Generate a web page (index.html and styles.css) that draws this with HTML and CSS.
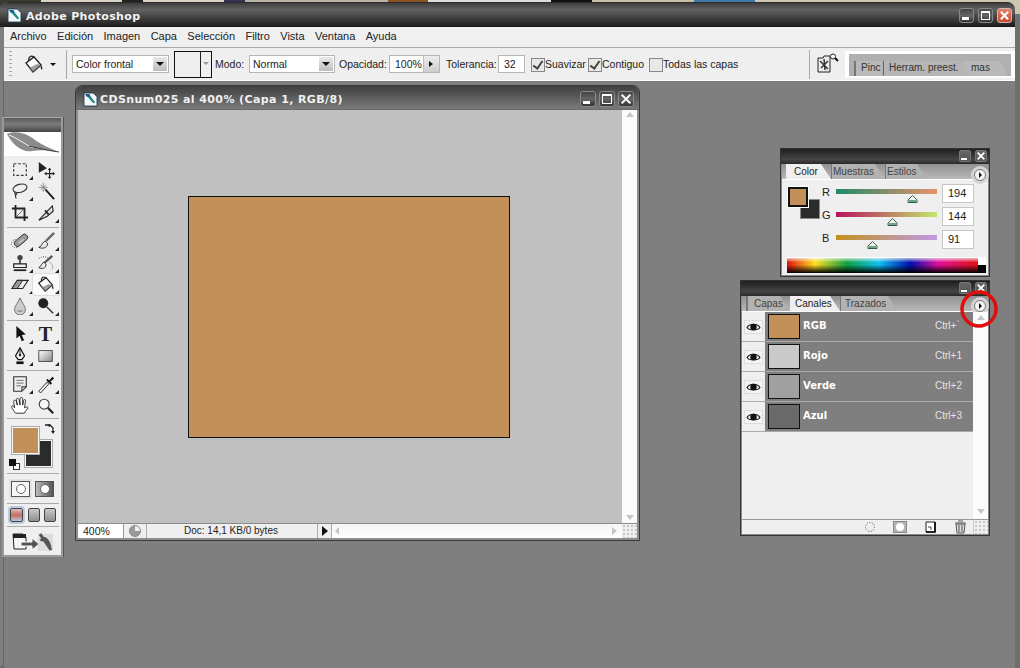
FILE: index.html
```html
<!DOCTYPE html>
<html lang="es">
<head>
<meta charset="utf-8">
<title>Adobe Photoshop</title>
<link rel="stylesheet" href="styles.css">
</head>
<body>
<div class="desktop">
  <div class="app">
    <header class="titlebar">
      <svg class="appicon" viewBox="0 0 16 16"><path d="M1 1h10l4 4v10H1z" fill="#f4f8fa" stroke="#16384a"/><path d="M3 3l8 9 2-1-7-9z" fill="#1c8a78"/><path d="M2 2h5l1 3H4z" fill="#1d5f96"/></svg>
      <span class="apptitle">Adobe Photoshop</span>
      <div class="wbtns app-btns">
        <span class="wbtn"><i class="min"></i></span>
        <span class="wbtn"><i class="max"></i></span>
        <span class="wbtn close"><svg viewBox="0 0 16 16"><path d="M3.5 3.5l9 9M12.5 3.5l-9 9" stroke="#fff" stroke-width="2.6"/></svg></span>
      </div>
    </header>
    <nav class="menubar">
      <span>Archivo</span><span>Edición</span><span>Imagen</span><span>Capa</span><span>Selección</span><span>Filtro</span><span>Vista</span><span>Ventana</span><span>Ayuda</span>
    </nav>
    <div class="options">
      <span class="gripper"></span>
      <svg class="opt-bucket" viewBox="0 0 20 20"><path d="M2 9l8-6 7 8-8 7z" fill="#fff" stroke="#222" stroke-width="1.4"/><path d="M9 18l8-7-4-1-8 4z" fill="#777" opacity=".7"/><path d="M10 3C7 1 4 3 5 7" fill="none" stroke="#222" stroke-width="1.2"/><path d="M17 11c1 2 2 3 1 5-1-1-2-3-1-5z" fill="#222"/></svg>
      <span class="mini-arrow"></span>
      <span class="vsep first"></span>
      <span class="select s-fill">Color frontal<b class="sel-arrow"></b></span>
      <span class="pattern"><i></i><b></b></span>
      <span class="lbl l-modo">Modo:</span>
      <span class="select s-mode">Normal<b class="sel-arrow"></b></span>
      <span class="lbl l-op">Opacidad:</span>
      <span class="numbox n-op">100%<b></b></span>
      <span class="lbl l-tol">Tolerancia:</span>
      <span class="field">32</span>
      <span class="check on c1">Suavizar</span>
      <span class="check on c2">Contiguo</span>
      <span class="check c3">Todas las capas</span>
      <span class="vsep last"></span>
      <svg class="opt-palette" viewBox="0 0 22 22"><path d="M1 5h5l1-2h6v16H1z" fill="#eee" stroke="#222"/><path d="M3 8l8 8M4 15l7-7M7 6l1 11" stroke="#333" stroke-width="1.5"/><circle cx="16" cy="3.5" r="2.5" fill="#fff" stroke="#222"/><path d="M18 5l3 3" stroke="#111" stroke-width="2"/></svg>
      <div class="well">
        <span class="wtab wt1">Pinc</span>
        <span class="wtab wt3">mas</span>
        <span class="wtab wt2">Herram. preest.</span>
      </div>
    </div>
    <main class="workspace"></main>
  </div>

  <aside class="toolbox">
    <div class="tb-head"></div>
    <div class="tb-feather">
      <svg viewBox="0 0 56 24"><path d="M2 2C10-2 22 1 30 8c7 5 15 8 24 12-11-2-19-2-27-1C17 21 7 12 2 2z" fill="#8c8c8c"/><path d="M4 3c8 3 14 8 24 13" stroke="#f2f2f2" fill="none"/><path d="M24 14c10 2 21 5 30 6" stroke="#444" fill="none" stroke-width="1.2"/></svg>
    </div>
    <div class="tools">
      <span class="tool c"><svg viewBox="0 0 20 20"><rect x="3" y="3" width="14" height="13" fill="none" stroke="#333" stroke-width="1.2" stroke-dasharray="3 2"/></svg></span>
      <span class="tool"><svg viewBox="0 0 20 20"><path d="M2 1v12l9-5z" fill="#222"/><path d="M14 9v10M9 14h10" stroke="#222" stroke-width="1.3"/><path d="M14 7.5l2 2.5h-4zM14 20l2-2.5h-4zM8 14l2.500-2v4zM20 14l-2.500-2v4z" fill="#222"/></svg></span>
      <span class="tool c"><svg viewBox="0 0 20 20"><ellipse cx="10" cy="7" rx="8" ry="4.500" fill="none" stroke="#333" stroke-width="1.2" transform="rotate(-15 10 7)"/><path d="M5 11c-2 2 0 4 1 3s-1-2-1 1 1 3 1 3" fill="none" stroke="#333" stroke-width="1.2"/></svg></span>
      <span class="tool"><svg viewBox="0 0 20 20"><path d="M9 8l10 11" stroke="#222" stroke-width="2.200"/><path d="M7 1v10M2 6h10M4 3l6 6M10 3L4 9" stroke="#888"/></svg></span>
      <span class="tool"><svg viewBox="0 0 20 20"><path d="M5 1v14h14M1 5h14v14" fill="none" stroke="#222" stroke-width="2"/><path d="M5 15L15 5" stroke="#555"/></svg></span>
      <span class="tool c"><svg viewBox="0 0 20 20"><path d="M2 18L17 2l1 6-7 6z" fill="#ddd" stroke="#222" stroke-width="1.2"/><path d="M9 7l4 5" stroke="#222" stroke-width="2"/></svg></span>
      <span class="tsep"></span>
      <span class="tool c"><svg viewBox="0 0 20 20"><circle cx="5" cy="13" r="4.500" fill="none" stroke="#333" stroke-dasharray="1 1.500"/><rect x="3" y="6" width="17" height="7" rx="3" fill="#999" stroke="#333" transform="rotate(-40 11 10)"/><path d="M9 12l5-4" stroke="#eee" stroke-width="2" stroke-dasharray="1 1"/></svg></span>
      <span class="tool c"><svg viewBox="0 0 20 20"><path d="M19 1L10 10" stroke="#666" stroke-width="2.600"/><path d="M9 10c-4 2-3 6-7 7 4 2 9 1 10-4z" fill="#eee" stroke="#222"/></svg></span>
      <span class="tool c"><svg viewBox="0 0 20 20"><circle cx="10" cy="4" r="3" fill="#444"/><path d="M9 6h2v5H9z" fill="#444"/><path d="M3 11h14v4H3z" fill="#eee" stroke="#222" stroke-width="1.300"/><path d="M3 18h14" stroke="#222" stroke-width="2"/></svg></span>
      <span class="tool c"><svg viewBox="0 0 20 20"><path d="M17 2L8 10" stroke="#555" stroke-width="2.600"/><path d="M8 9c-3 1-3 5-6 6 3 2 8 1 8-3z" fill="#eee" stroke="#222"/><path d="M2 5c5-3 8-2 11 0M14 9c4 3 4 6 2 9" fill="none" stroke="#333" stroke-dasharray="1 1.500"/></svg></span>
      <span class="tool c"><svg viewBox="0 0 20 20"><path d="M1 15L7 6h12l-6 9z" fill="#eee" stroke="#222" stroke-width="1.200"/><path d="M1 15h6l6-9H7z" fill="#999" stroke="#222"/></svg></span>
      <span class="tool c active"><svg viewBox="0 0 20 20"><path d="M2 9l8-6 7 8-8 7z" fill="#fff" stroke="#222" stroke-width="1.400"/><path d="M9 18l8-7-4-1-8 4z" fill="#777" opacity=".7"/><path d="M10 3C7 1 4 3 5 7" fill="none" stroke="#222" stroke-width="1.200"/><path d="M17 11c1 2 2 3 1 5-1-1-2-3-1-5z" fill="#222"/></svg></span>
      <span class="tool c"><svg viewBox="0 0 20 20"><path d="M10 1C7 8 4 10 4 14a6 6 0 0 0 12 0c0-4-3-6-6-13z" fill="#ccc" stroke="#666"/><path d="M6 15a5 4 0 0 0 8 0" fill="#888"/></svg></span>
      <span class="tool c"><svg viewBox="0 0 20 20"><circle cx="7" cy="7" r="5.500" fill="#222"/><path d="M11 11l7 7" stroke="#333" stroke-width="1.600"/></svg></span>
      <span class="tsep"></span>
      <span class="tool c"><svg viewBox="0 0 20 20"><path d="M6 1v14l3.500-3 2.500 6 2.500-1-2.500-6 4.500-.5z" fill="#111"/></svg></span>
      <span class="tool c"><span class="t-glyph">T</span></span>
      <span class="tool c"><svg viewBox="0 0 20 20"><path d="M10 1l5 9-3 4H8l-3-4z" fill="#eee" stroke="#111" stroke-width="1.300"/><path d="M10 2v7" stroke="#111"/><circle cx="10" cy="9" r="1.300" fill="#111"/><path d="M6 16h8v3H6z" fill="#111"/></svg></span>
      <span class="tool c"><svg viewBox="0 0 20 20"><defs><linearGradient id="shapeGrad" x1="0" y1="0" x2="1" y2="1"><stop offset="0" stop-color="#fff"/><stop offset="1" stop-color="#888"/></linearGradient></defs><rect x="2" y="4" width="15" height="12" fill="url(#shapeGrad)" stroke="#444"/></svg></span>
      <span class="tsep"></span>
      <span class="tool c"><svg viewBox="0 0 20 20"><path d="M3 2h14v11l-5 5H3z" fill="#eee" stroke="#333" stroke-width="1.200"/><path d="M6 6h8M6 9h8M6 12h5" stroke="#666"/><path d="M12 18v-5h5z" fill="#bbb" stroke="#333"/></svg></span>
      <span class="tool c"><svg viewBox="0 0 20 20"><path d="M2 18l9-10 2 2-9 10z" fill="#eee" stroke="#222"/><path d="M11 5l5 5" stroke="#111" stroke-width="2"/><path d="M13 7l4-5 2 2-5 4z" fill="#111"/></svg></span>
      <span class="tool"><svg viewBox="0 0 20 20"><path d="M5 18c-2-3-5-6-4-8 1-1 3 1 3 2L3 5c0-2 2-2 3 0l1 4-1-6c0-2 2-2 3 0l1 6V2c0-2 3-2 3 0l0 7 1-5c1-2 3-1 2 1l-1 7c2-1 3-1 4 0-1 2-3 3-4 6z" fill="#fff" stroke="#222"/></svg></span>
      <span class="tool"><svg viewBox="0 0 20 20"><circle cx="8" cy="8" r="5.500" fill="#f7f7f7" stroke="#444" stroke-width="1.300"/><path d="M12 12l6 6" stroke="#222" stroke-width="2.400"/></svg></span>
    </div>
    <span class="tsep wide"></span>
    <div class="colors">
      <span class="swap"><svg viewBox="0 0 12 12"><path d="M2 1h5l3 3v4" fill="none" stroke="#222" stroke-width="1.300"/><path d="M7 0l-3 1.500L7 3zM8 7l2 3 2-3z" fill="#222"/></svg></span>
      <span class="c-bg"></span><span class="c-fg"></span>
      <span class="c-def"><i></i><b></b></span>
    </div>
    <span class="tsep wide"></span>
    <div class="qmask">
      <span class="qm std"><i></i></span>
      <span class="qm mask"><i></i></span>
    </div>
    <span class="tsep wide"></span>
    <div class="screens">
      <span class="scr sel"></span><span class="scr"></span><span class="scr"></span>
    </div>
    <span class="tsep wide"></span>
    <div class="jump">
      <svg viewBox="0 0 44 21"><path d="M2 3h10l3 3v12H3z" fill="#f5f5f5" stroke="#222"/><path d="M2 3h13v4H2z" fill="#222"/><path d="M10 11h11V7l7 6-7 6v-4H10z" fill="#555" stroke="#fff"/><rect x="27" y="3" width="15" height="17" fill="#ddd"/><path d="M29 3l11 16M30 10c3-6 8 0 9 7" stroke="#555" stroke-width="3" fill="none"/></svg>
    </div>
  </aside>

  <section class="docwin">
    <div class="doc-title">
      <svg class="appicon" viewBox="0 0 16 16"><path d="M1 1h10l4 4v10H1z" fill="#f4f8fa" stroke="#16384a"/><path d="M3 3l8 9 2-1-7-9z" fill="#1c8a78"/><path d="M2 2h5l1 3H4z" fill="#1d5f96"/></svg>
      <span class="doctitle-text">CDSnum025 al 400% (Capa 1, RGB/8)</span>
      <div class="wbtns doc-btns">
        <span class="wbtn"><i class="min"></i></span>
        <span class="wbtn"><i class="max"></i></span>
        <span class="wbtn"><svg viewBox="0 0 16 16"><path d="M3 3l10 10M13 3L3 13" stroke="#fff" stroke-width="2.400"/></svg></span>
      </div>
    </div>
    <div class="doc-body">
      <div class="canvas"><div class="image"></div></div>
      <div class="vscroll"><i class="up"></i><i class="down"></i></div>
    </div>
    <div class="doc-status">
      <span class="st-zoom">400%</span>
      <span class="st-icon"><i></i></span>
      <span class="st-doc">Doc: 14,1 KB/0 bytes</span>
      <span class="st-arrow"><i></i></span>
      <span class="hscroll"><i class="left"></i><i class="right"></i></span>
      <span class="grip"></span>
    </div>
  </section>

  <section class="panel colorpanel">
    <div class="p-title"><span class="pbtn"><i class="min"></i></span><span class="pbtn"><svg viewBox="0 0 12 12"><path d="M2 2l8 8M10 2l-8 8" stroke="#fff" stroke-width="2.200"/></svg></span></div>
    <div class="p-tabs">
      <span class="tab on t-color">Color</span><span class="tab t-mues">Muestras</span><span class="tab t-esti">Estilos</span>
      <span class="pmenu"></span>
    </div>
    <div class="color-body">
      <div class="swatches"><span class="sw-bg"></span><span class="sw-fg"></span></div>
      <div class="sliders">
        <div class="srow"><span class="slabel">R</span><div class="strack r"><svg class="thumb tr" viewBox="0 0 11 8"><path d="M5.500.5L10 5v2.500H1V5z" fill="#f2f2f2" stroke="#2f5f45"/><path d="M2 5h7v2H2z" fill="#6aa37e"/></svg></div><span class="sval">194</span></div>
        <div class="srow"><span class="slabel">G</span><div class="strack g"><svg class="thumb tg" viewBox="0 0 11 8"><path d="M5.500.5L10 5v2.500H1V5z" fill="#f2f2f2" stroke="#2f5f45"/><path d="M2 5h7v2H2z" fill="#6aa37e"/></svg></div><span class="sval">144</span></div>
        <div class="srow"><span class="slabel">B</span><div class="strack b"><svg class="thumb tb" viewBox="0 0 11 8"><path d="M5.500.5L10 5v2.500H1V5z" fill="#f2f2f2" stroke="#2f5f45"/><path d="M2 5h7v2H2z" fill="#6aa37e"/></svg></div><span class="sval">91</span></div>
      </div>
      <div class="spectrum"><span class="sp-swatch"></span></div>
    </div>
  </section>

  <section class="panel chanpanel">
    <div class="p-title"><span class="pbtn"><i class="min"></i></span><span class="pbtn"><svg viewBox="0 0 12 12"><path d="M2 2l8 8M10 2l-8 8" stroke="#fff" stroke-width="2.200"/></svg></span></div>
    <div class="p-tabs">
      <span class="tab t-capas">Capas</span><span class="tab on t-canales">Canales</span><span class="tab t-traz">Trazados</span>
      <span class="pmenu"></span>
    </div>
    <div class="chan-body">
      <div class="chan-list">
        <div class="chan"><span class="eye"><svg viewBox="0 0 14 11"><path d="M1 6c2-4 10-4 12 0-2 3-10 3-12 0z" fill="#eee" stroke="#111"/><circle cx="7" cy="5.500" r="3" fill="#111"/></svg></span><span class="chan-main"><i class="thumbn n1"></i><b>RGB</b><em>Ctrl+`</em></span></div>
        <div class="chan"><span class="eye"><svg viewBox="0 0 14 11"><path d="M1 6c2-4 10-4 12 0-2 3-10 3-12 0z" fill="#eee" stroke="#111"/><circle cx="7" cy="5.500" r="3" fill="#111"/></svg></span><span class="chan-main"><i class="thumbn n2"></i><b>Rojo</b><em>Ctrl+1</em></span></div>
        <div class="chan"><span class="eye"><svg viewBox="0 0 14 11"><path d="M1 6c2-4 10-4 12 0-2 3-10 3-12 0z" fill="#eee" stroke="#111"/><circle cx="7" cy="5.500" r="3" fill="#111"/></svg></span><span class="chan-main"><i class="thumbn n3"></i><b>Verde</b><em>Ctrl+2</em></span></div>
        <div class="chan"><span class="eye"><svg viewBox="0 0 14 11"><path d="M1 6c2-4 10-4 12 0-2 3-10 3-12 0z" fill="#eee" stroke="#111"/><circle cx="7" cy="5.500" r="3" fill="#111"/></svg></span><span class="chan-main"><i class="thumbn n4"></i><b>Azul</b><em>Ctrl+3</em></span></div>
      </div>
      <div class="chan-scroll"><i class="up"></i><i class="down"></i></div>
    </div>
    <div class="chan-foot">
      <svg class="fi" viewBox="0 0 14 14"><circle cx="7" cy="7" r="4.500" fill="none" stroke="#555" stroke-dasharray="1 1.500"/></svg>
      <span class="fi-mask"><i></i></span>
      <svg class="fi" viewBox="0 0 14 14"><path d="M3 2h9v10H3z" fill="#fff" stroke="#222"/><path d="M3 12h9V2" fill="none" stroke="#000" stroke-width="1.600"/><path d="M5 7h3v3" fill="none" stroke="#444"/></svg>
      <svg class="fi" viewBox="0 0 14 14"><path d="M3 4h9l-1 9H4z" fill="#ddd" stroke="#555"/><path d="M2 3h11M5 1h5M6 5v7M9 5v7" stroke="#555"/></svg>
      <span class="grip"></span>
    </div>
  </section>

  <svg class="redmark" viewBox="0 0 38 38"><circle cx="19" cy="19" r="17" fill="none" stroke="#e00d0d" stroke-width="3.500"/></svg>
</div>
</body>
</html>
```
FILE: styles.css
```css
* { box-sizing: border-box; }
html, body { margin: 0; padding: 0; }
body { font: 11px "Liberation Sans", Arial, sans-serif; color: #222; background: #7f7f7f; }
i, em, b { font-style: normal; }
svg { display: block; flex: none; }

.desktop {
  position: relative; width: 1020px; height: 668px; overflow: hidden; padding: 2px 5px 0 0;
  background: linear-gradient(90deg, #3a3a30 0 4%, #d8d3c4 4% 12%, #222 12% 14%, #d8d3c4 14% 22%, #335 22% 24%, #b9b4a5 24% 38%, #852 38% 42%, #ddd 42% 54%, #111 54% 58%, #c6c0a8 58% 68%, #47a 68% 74%, #cfc8b0 74% 100%);
}
.desktop::after { content: ""; position: absolute; left: 1015px; right: 0; top: 14px; bottom: 0; background: #6f6f6f; }

.app { height: 666px; display: flex; flex-direction: column; border-radius: 8px 8px 0 0; overflow: hidden; background: #7f7f7f; box-shadow: inset 0 -2px 0 #6b6b6b; }

.titlebar { height: 25px; flex: none; display: flex; align-items: center; padding: 0 3px 0 7px; background: linear-gradient(#3e3e3e, #626262 28%, #1b1b1b 100%); border-top: 1px solid #2a2a2a; }
.appicon { width: 15px; height: 15px; flex: none; }
.apptitle { margin: 2px 0 0 4px; color: #f2f2f2; font: bold 11px "DejaVu Sans", sans-serif; letter-spacing: .35px; }
.wbtns { margin-left: auto; display: flex; }
.app-btns { gap: 4px; }
.wbtn { width: 15px; height: 15px; border: 1px solid #8a8a8a; border-radius: 3px; background: linear-gradient(#444, #666 50%, #333); position: relative; display: block; }
.wbtn.close { background: linear-gradient(#e88066, #c84a2e); border-color: #c9bbb5; }
.wbtn svg { width: 100%; height: 100%; }
.min { position: absolute; left: 2px; bottom: 2px; width: 7px; height: 3px; background: #fff; }
.max { position: absolute; inset: 2px; border: 1px solid #fff; border-top-width: 2px; }

.menubar { height: 20px; flex: none; display: flex; gap: 10.400px; align-items: center; padding: 0 0 3px 6px; margin: 0 0 0 4px; background: #f0f0f0; font-size: 11px; color: #222; }
.menubar span { flex: none; }

.options { height: 34px; flex: none; display: flex; align-items: center; margin-left: 4px; background: #efefef; border-top: 1px solid #a9a9a9; border-bottom: 1px solid #fff; position: relative; font-size: 10.500px; white-space: nowrap; }
.gripper { width: 3px; height: 26px; margin-left: 5px; background: repeating-linear-gradient(#aaa 0 1px, transparent 1px 4px); }
.opt-bucket { width: 20px; height: 20px; margin-left: 12px; }
.mini-arrow { width: 0; height: 0; margin-left: 6px; border: 3px solid transparent; border-top: 3px solid #111; border-bottom: 0; }
.vsep { width: 1px; height: 29px; background: #a8a8a8; flex: none; }
.vsep.first { margin-left: 10px; }
.select { height: 18px; background: #fff; border: 1px solid #b5b5b5; display: flex; align-items: center; padding-left: 3px; position: relative; flex: none; }
.s-fill { width: 97px; margin-left: 5px; }
.s-mode { width: 86px; margin-left: 3px; }
.sel-arrow { position: absolute; right: 1px; top: 1px; bottom: 1px; width: 14px; background: linear-gradient(#e8e8e8, #bdbdbd); }
.sel-arrow::after { content: ""; position: absolute; left: 3px; top: 5px; border: 4px solid transparent; border-top: 4px solid #111; border-bottom: 0; }
.pattern { width: 38px; height: 27px; margin-left: 5px; border: 1px solid #111; display: flex; background: #efefef; flex: none; }
.pattern i { width: 26px; border-right: 1px solid #222; }
.pattern b { flex: 1; position: relative; }
.pattern b::after { content: ""; position: absolute; left: 2px; top: 10px; border: 3px solid transparent; border-top: 3px solid #999; border-bottom: 0; }
.lbl { flex: none; }
.l-modo { margin-left: 3px; width: 31px; }
.l-op { margin-left: 4px; width: 47px; }
.l-tol { margin-left: 6px; width: 49px; }
.numbox { width: 51px; height: 18px; margin-left: 3px; border: 1px solid #b5b5b5; background: #fff; display: flex; align-items: center; padding-left: 5px; position: relative; flex: none; }
.numbox b { position: absolute; right: 0; top: 0; bottom: 0; width: 16px; background: linear-gradient(#eee, #ccc); border-left: 1px solid #bbb; }
.numbox b::after { content: ""; position: absolute; left: 5px; top: 5px; border: 3px solid transparent; border-left: 4px solid #111; border-right: 0; }
.field { width: 27px; height: 18px; margin-left: 3px; border: 1px solid #b5b5b5; background: #fff; display: flex; align-items: center; padding-left: 5px; flex: none; }
.check { display: flex; align-items: center; flex: none; position: relative; padding-left: 14px; }
.check::before { content: ""; position: absolute; left: 0; top: 0; width: 12px; height: 12px; border: 1px solid #888; background: #e8e8e8; }
.check.on::after { content: ""; position: absolute; left: 4px; top: 1px; width: 4px; height: 8px; border: solid #444; border-width: 0 2px 2px 0; transform: rotate(35deg); }
.c1 { margin-left: 6px; width: 57px; }
.c2 { width: 61px; }
.c3 { width: 90px; }
.vsep.last { margin-left: auto; }
.opt-palette { width: 22px; height: 22px; margin-left: 7px; }
.well { width: 170px; height: 27px; margin-left: 6px; padding: 3px 4px; background: #fff; position: relative; flex: none; overflow: hidden; border-left: 1px solid #fff; }
.well::before { content: ""; position: absolute; inset: 3px 4px 2px 3px; background: #b0b0b0; }
.wtab { position: absolute; bottom: 2px; height: 15px; line-height: 14px; padding-left: 5px; background: #b9b9b9; color: #333; font-size: 10px; }
.wt1 { left: 8px; width: 28px; border-left: 2px solid #777; }
.wt2 { left: 37px; width: 88px; border-left: 1px solid #666; clip-path: polygon(0 0, 88% 0, 100% 100%, 0 100%); background: #b5b5b5; }
.wt3 { left: 118px; width: 44px; padding-left: 7px; clip-path: polygon(0 0, 80% 0, 100% 100%, 0 100%); }

.workspace { flex: 1; margin-left: 3px; background: #7f7f7f; border-left: 1px solid #666; }

.toolbox { position: absolute; left: 2px; top: 117px; width: 61px; height: 440px; border: 2px solid #9a9a9a; border-top: 1px solid #aaa; background: #efefef; display: flex; flex-direction: column; align-items: center; box-shadow: 1px 0 0 #555; }
.tb-head { height: 14px; width: 100%; flex: none; background: linear-gradient(#5a5a5a, #7c7c7c 45%, #454545); }
.tb-feather { height: 24px; width: 100%; flex: none; background: #fff; padding: 0 1px; }
.tb-feather svg { width: 56px; height: 24px; }
.tools { display: grid; grid-template-columns: 26px 26px; margin-top: 3px; width: 52px; flex: none; }
.tool { position: relative; display: flex; align-items: center; justify-content: center; height: 21.500px; }
.tool svg { width: 18px; height: 18px; }
.tool.c::after { content: ""; position: absolute; right: 0; bottom: 1px; border: 2px solid transparent; border-right-color: #222; border-bottom-color: #222; }
.tool.active { background: #fafafa; border-radius: 3px; box-shadow: 0 0 0 1px #dcdcdc; }
.t-glyph { font: bold 20px "Liberation Serif", serif; color: #222; line-height: 20px; }
.tsep { grid-column: 1 / 3; height: 1px; background: #aaa; margin: 3px 0; }
.tsep.wide { width: 52px; flex: none; margin: 0; }
.tools + .tsep.wide { margin-top: 1px; }
.colors { position: relative; width: 52px; height: 54px; flex: none; }
.c-fg { position: absolute; left: 5px; top: 8px; width: 27px; height: 27px; background: #c29159; border: 1px solid #f8f8f8; outline: 1px solid #aaa; }
.c-bg { position: absolute; left: 18px; top: 21px; width: 27px; height: 27px; background: #2b2b2b; border: 1px solid #f8f8f8; outline: 1px solid #aaa; }
.swap { position: absolute; left: 36px; top: 5px; width: 12px; height: 12px; }
.c-def { position: absolute; left: 2px; top: 40px; width: 11px; height: 11px; }
.c-def b { position: absolute; left: 4px; top: 4px; width: 7px; height: 7px; background: #fff; border: 1px solid #333; }
.c-def i { position: absolute; left: 0; top: 0; width: 7px; height: 7px; background: #111; z-index: 1; }
.qmask { display: flex; gap: 5px; height: 29px; flex: none; align-items: center; padding-top: 1px; }
.qm { width: 19px; height: 16px; border: 1px solid #555; display: flex; align-items: center; justify-content: center; }
.qm i { width: 10px; height: 10px; border-radius: 50%; background: #fff; border: 1px solid #666; }
.qm.std { background: #f5f5f5; box-shadow: 0 0 0 2px #e2e2e2; }
.qm.mask { background: linear-gradient(90deg, #bbb, #555); }
.screens { display: flex; gap: 4px; height: 22px; flex: none; align-items: center; }
.scr { width: 12px; height: 14px; border: 1px solid #444; border-radius: 2px; background: linear-gradient(#c9c9c9, #8f8f8f); }
.scr.sel { width: 13px; background: linear-gradient(#d8c0c8, #c86a5a 50%, #b8c8e0); box-shadow: 0 0 0 2px #bccbdc; margin-right: 1px; }
.jump { height: 27px; flex: none; padding-top: 4px; }
.jump svg { width: 44px; height: 21px; }

.docwin { position: absolute; left: 75px; top: 85px; width: 565px; height: 456px; border: 1px solid #3b3b3b; border-radius: 7px 7px 0 0; background: #8d8d8d; display: flex; flex-direction: column; padding: 0 2px 2px; }
.doc-title { height: 24px; margin: 0 -2px; flex: none; display: flex; align-items: center; padding: 3px 5px 0 7px; border-radius: 6px 6px 0 0; background: linear-gradient(#3f3f3f, #7a7a7a); border-bottom: 1px solid #6a6a6a; }
.doctitle-text { margin-left: 2px; color: #f0f0f0; font: bold 11px "DejaVu Sans", sans-serif; letter-spacing: .4px; }
.doc-btns { gap: 3px; }
.doc-btns .wbtn { width: 16px; height: 16px; }
.doc-body { flex: 1; display: flex; min-height: 0; }
.canvas { flex: 1; display: flex; align-items: center; justify-content: center; background: #c0c0c0; padding-right: 2px; }
.image { width: 322px; height: 242px; background: #c29159; border: 1px solid #111; }
.vscroll { width: 15px; flex: none; background: #fbfbfb; position: relative; }
.up, .down { position: absolute; left: 4px; border: 4px solid transparent; }
.vscroll .up { top: 2px; border-bottom: 5px solid #c6c6c6; border-top: 0; }
.vscroll .down { bottom: 3px; border-top: 5px solid #c6c6c6; border-bottom: 0; }
.doc-status { height: 15px; flex: none; display: flex; border-top: 1px solid #8a8a8a; background: #efefef; font-size: 10.500px; }
.st-zoom { width: 46px; background: #fff; padding-left: 5px; line-height: 14px; border-right: 1px solid #999; }
.st-icon { width: 23px; display: flex; align-items: center; justify-content: center; border-right: 1px solid #aaa; }
.st-icon i { width: 12px; height: 12px; border-radius: 50%; background: conic-gradient(#eee 0 25%, #9a9a9a 25%); border: 1px solid #888; }
.st-doc { width: 170px; text-align: center; line-height: 14px; padding-right: 2px; font-size: 10px; }
.st-arrow { width: 15px; border: solid #aaa; border-width: 0 1px; position: relative; }
.st-arrow i { position: absolute; left: 4px; top: 2px; border: 5px solid transparent; border-left: 6px solid #111; border-right: 0; }
.hscroll { flex: 1; background: linear-gradient(#f4f4f4, #fff); position: relative; }
.left { position: absolute; left: 3px; top: 3px; border: 4px solid transparent; border-right: 4px solid #c6c6c6; border-left: 0; }
.right { position: absolute; right: 5px; top: 3px; border: 4px solid transparent; border-left: 5px solid #c6c6c6; border-right: 0; }
.grip { width: 15px; flex: none; background: radial-gradient(#c8c8c8 1px, transparent 1.500px) 0 0 / 4px 4px; }

.panel { position: absolute; border: 1px solid #333; background: #efefef; box-shadow: inset 0 0 0 1px #8a8a8a; display: flex; flex-direction: column; }
.colorpanel { left: 780px; top: 148px; width: 210px; height: 129px; padding: 0 1px 1px; }
.chanpanel { left: 740px; top: 280px; width: 250px; height: 256px; padding: 0 1px 1px; }
.p-title { height: 15px; margin: 0 -1px; flex: none; display: flex; justify-content: flex-end; gap: 4px; padding: 1px 2px 0 0; background: linear-gradient(#1f1f1f, #454545 70%, #2a2a2a); }
.pbtn { width: 12px; height: 12px; border-radius: 2px; background: linear-gradient(#666, #555); position: relative; border: 1px solid #777; }
.pbtn .min { left: 1px; bottom: 1px; width: 6px; height: 2px; }
.pbtn svg { width: 100%; height: 100%; }
.p-tabs { height: 16px; flex: none; display: flex; align-items: flex-end; padding-left: 4px; background: linear-gradient(#919191, #b9b9b9); position: relative; border-bottom: 1px solid #fff; }
.tab { height: 15px; line-height: 16px; font-size: 10px; padding-left: 5px; color: #444; background: #b2b2b2; clip-path: polygon(0 0, calc(100% - 10px) 0, 100% 100%, 0 100%); flex: none; border-left: 1px solid #777; }
.tab.on { background: #efefef; color: #222; border-left: 0; }
.t-color { width: 45px; padding-left: 8px; }
.t-mues { width: 54px; padding-left: 1px; }
.t-esti { width: 42px; padding-left: 1px; }
.t-capas { width: 44px; border-left-width: 2px; padding-left: 6px; }
.t-canales { width: 50px; padding-left: 5px; }
.t-traz { width: 58px; padding-left: 4px; }
.pmenu { position: absolute; right: 2px; top: 4px; width: 12px; height: 12px; border-radius: 50%; border: 1px solid #777; background: #f4f4f4; box-shadow: 0 0 0 3px #d4d4d4; }
.colorpanel .pmenu { top: 5px; }
.pmenu::after { content: ""; position: absolute; left: 4px; top: 2px; border: 3px solid transparent; border-left: 3px solid #111; border-right: 0; }

.color-body { flex: 1; position: relative; padding: 4px 0 0 54px; display: flex; flex-direction: column; }
.swatches { position: absolute; left: 6px; top: 7px; width: 33px; height: 33px; }
.sw-fg { position: absolute; left: 0; top: 0; width: 20px; height: 20px; background: #c29159; border: 2px solid #111; outline: 1px solid #fff; }
.sw-bg { position: absolute; left: 12px; top: 12px; width: 20px; height: 20px; background: #2b2b2b; border: 1px solid #8a8a8a; outline: 1px solid #eee; }
.sliders { display: flex; flex-direction: column; gap: 4px; }
.srow { height: 19px; display: flex; align-items: center; position: relative; }
.slabel { position: absolute; left: -14px; top: 2px; font-size: 11px; line-height: 13px; }
.strack { width: 101px; height: 5px; position: relative; margin-top: -4px; }
.strack.r { background: linear-gradient(90deg, #1f8a6a, #e8946a); }
.strack.g { background: linear-gradient(90deg, #b9115f, #c2e86a); }
.strack.b { background: linear-gradient(90deg, #c2921f, #c09ae8); }
.thumb { position: absolute; top: 6px; width: 11px; height: 8px; }
.tr { left: 71px; }
.tg { left: 51px; }
.tb { left: 31px; }
.sval { width: 32px; height: 19px; margin-left: 5px; background: #fff; border: 1px solid #c6c6c6; padding-left: 5px; line-height: 17px; }
.spectrum { position: absolute; left: 5px; bottom: 2px; width: 199px; height: 16px; background: linear-gradient(#ffffffb0, transparent 30%, transparent 45%, #000 100%), linear-gradient(90deg, #e01010, #ffe020 14%, #10a040 30%, #10c0f0 46%, #0010b0 62%, #e0109a 76%, #e01010 96%); border-top: 1px solid #fff; }
.sp-swatch { position: absolute; right: 0; top: 0; bottom: 0; width: 8px; background: linear-gradient(#fff 50%, #000 50%); }

.chan-body { flex: 1; display: flex; min-height: 0; }
.chan-list { flex: 1; display: flex; flex-direction: column; }
.chan { height: 30px; display: flex; flex: none; }
.eye { width: 23px; flex: none; display: flex; align-items: center; justify-content: center; border-bottom: 1px solid #aaa; }
.eye svg { width: 15px; height: 12px; border: 1px solid #ddd; padding: 0 1px; box-sizing: content-box; background: #f4f4f4; }
.chan-main { flex: 1; display: flex; align-items: center; background: #7f7f7f; color: #fff; border-bottom: 1px solid #aaa; padding-left: 3px; }
.thumbn { width: 32px; height: 25px; border: 1px solid #111; }
.n1 { background: #c29159; }
.n2 { background: #c9c9c9; }
.n3 { background: #a0a0a0; }
.n4 { background: #6a6a6a; }
.chan-main b { margin: 0 0 2px 3px; font: bold 10px "DejaVu Sans", sans-serif; }
.chan-main em { margin: 0 0 2px auto; width: 38px; color: #e4e4e4; font-size: 10px; overflow: hidden; }
.chan-scroll { width: 15px; flex: none; background: #fcfcfc; position: relative; }
.chan-scroll .up { top: 3px; border-bottom: 5px solid #c6c6c6; border-top: 0; }
.chan-scroll .down { bottom: 5px; border-top: 5px solid #c6c6c6; border-bottom: 0; }
.chan-foot { height: 15px; flex: none; display: flex; align-items: center; justify-content: flex-end; border-top: 1px solid #999; position: relative; padding-right: 21px; gap: 16px; }
.chan-foot .grip { position: absolute; right: 0; top: 0; bottom: 0; border-left: 1px solid #ccc; }
.fi { width: 14px; height: 14px; }
.fi-mask { width: 14px; height: 12px; background: #b4b4b4; border: 1px solid #888; display: flex; align-items: center; justify-content: center; }
.fi-mask i { width: 8px; height: 8px; background: #fff; border-radius: 50%; }

.redmark { position: absolute; left: 960px; top: 290px; width: 38px; height: 38px; }
```
